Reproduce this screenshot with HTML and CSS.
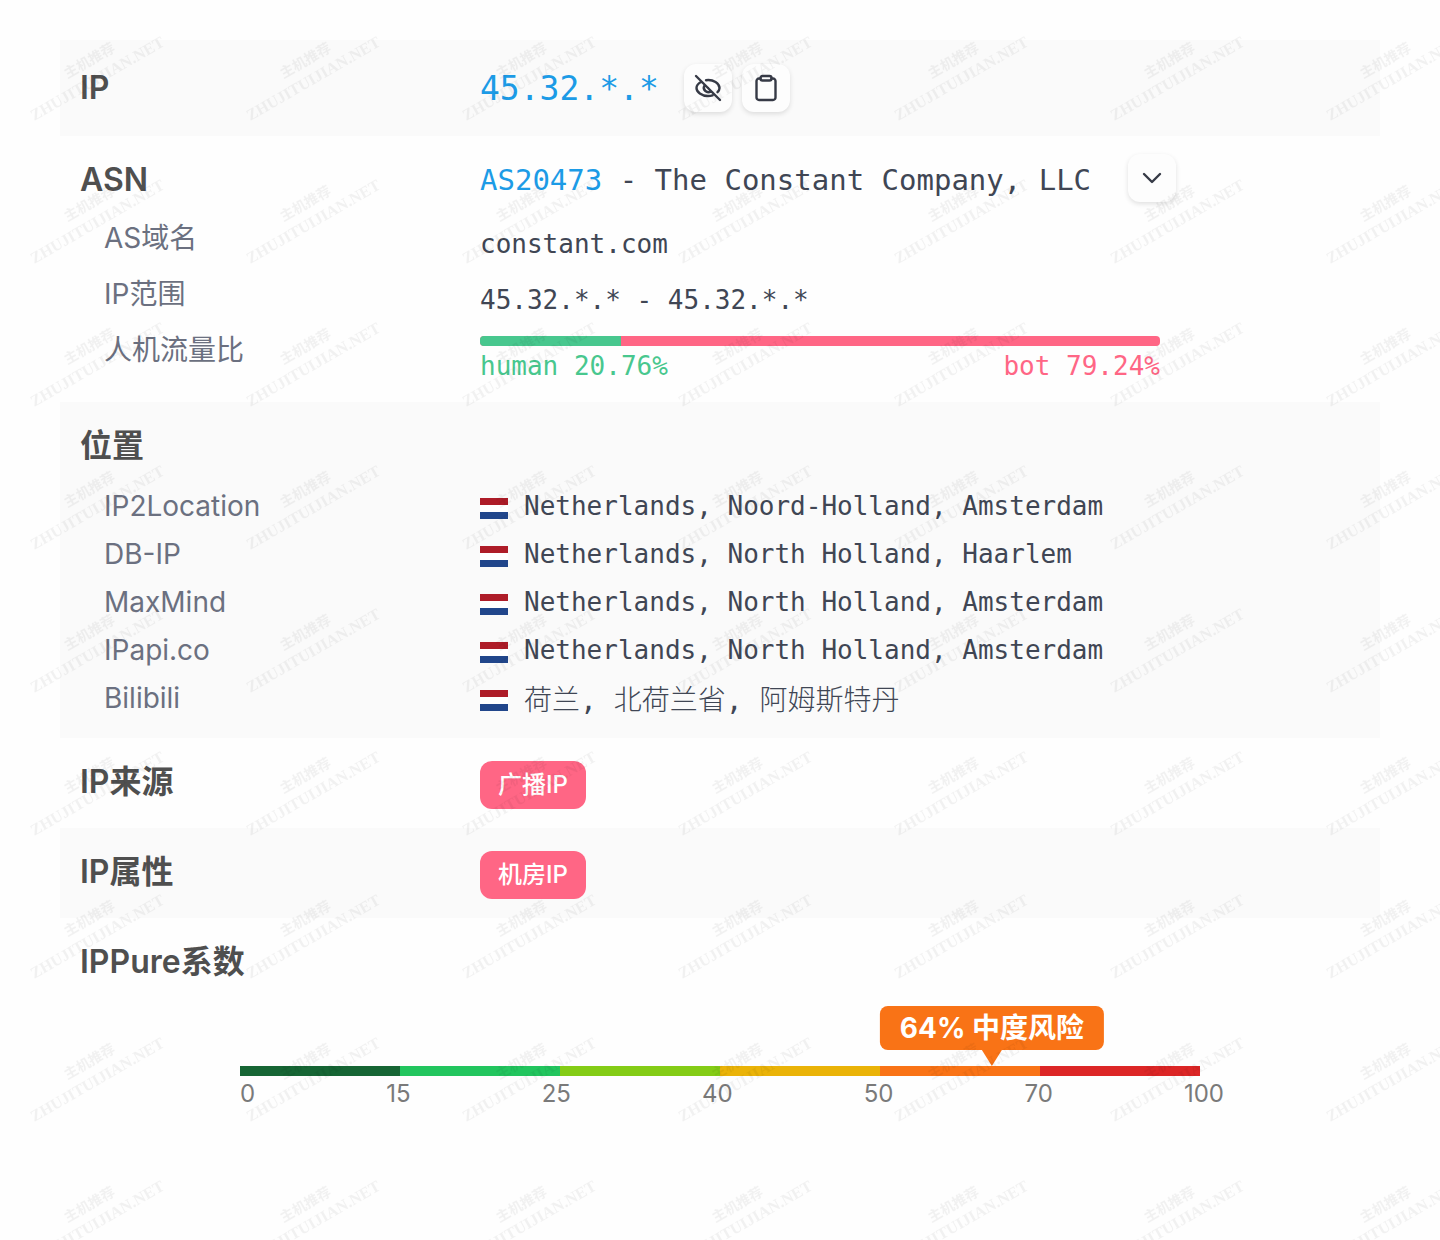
FILE: index.html
```html
<!DOCTYPE html>
<html lang="zh-CN">
<head>
    <meta charset="UTF-8">
    <meta name="viewport" content="width=device-width, initial-scale=1.0">
    <title>IPPure</title>
    <link rel="stylesheet" href="styles.css">
</head>
<body>
    <main>
        <section class="row row-ip">
            <h2>IP</h2>
            <div class="line">
                <a class="ip" href="#ip">45.32.*.*</a>
                <div class="buttons">
                    <button type="button" aria-label="隐藏IP">
                        <svg viewBox="0 0 28 28"><path d="M2 2l24 24M7 8C4.400 9.400 2.500 11.800 2.500 14c0 4 5 8 11.500 8 1.600 0 3.100-.2 4.500-.7M12 6.200C19.500 5.200 25.500 9.500 25.500 14c0 1.500-.7 3-2 4.200M10.300 11.800a4.300 4.300 0 0 0 6.400 5.400M14 13.800l.2.200"/></svg>
                    </button>
                    <button type="button" aria-label="复制IP">
                        <svg viewBox="0 0 28 28"><path d="M8.500 4.500H7A2.500 2.500 0 0 0 4.500 7v16.500A2.500 2.500 0 0 0 7 26h14a2.500 2.500 0 0 0 2.500-2.500V7A2.500 2.500 0 0 0 21 4.500h-1.500"/><rect x="8.500" y="2" width="11" height="4.500" rx="2"/></svg>
                    </button>
                </div>
            </div>
        </section>

        <section class="row">
            <div>
                <h2>ASN</h2>
                <ul class="names">
                    <li>AS域名</li>
                    <li>IP范围</li>
                    <li>人机流量比</li>
                </ul>
            </div>
            <div>
                <div class="line asn">
                    <span><a href="#asn">AS20473</a> - The Constant Company, LLC</span>
                    <button type="button" aria-label="展开">
                        <svg viewBox="0 0 28 28"><path d="M6 10l8 8 8-8"/></svg>
                    </button>
                </div>
                <ul class="values">
                    <li>constant.com</li>
                    <li>45.32.*.* - 45.32.*.*</li>
                </ul>
                <div class="traffic">
                    <div class="traffic-bar"><div style="width: 20.76%"></div></div>
                    <div class="traffic-text">
                        <span class="human">human 20.76%</span>
                        <span class="bot">bot 79.24%</span>
                    </div>
                </div>
            </div>
        </section>

        <section class="row">
            <h2 class="full">位置</h2>
            <ul class="sources">
                <li>IP2Location</li>
                <li>DB-IP</li>
                <li>MaxMind</li>
                <li>IPapi.co</li>
                <li>Bilibili</li>
            </ul>
            <ul class="places">
                <li><span class="flag"></span>Netherlands, Noord-Holland, Amsterdam</li>
                <li><span class="flag"></span>Netherlands, North Holland, Haarlem</li>
                <li><span class="flag"></span>Netherlands, North Holland, Amsterdam</li>
                <li><span class="flag"></span>Netherlands, North Holland, Amsterdam</li>
                <li class="cjk"><span class="flag"></span>荷兰, 北荷兰省, 阿姆斯特丹</li>
            </ul>
        </section>

        <section class="row row-tag">
            <h2>IP来源</h2>
            <div><span class="tag">广播IP</span></div>
        </section>

        <section class="row row-tag">
            <h2>IP属性</h2>
            <div><span class="tag">机房IP</span></div>
        </section>

        <section class="row">
            <h2 class="full">IPPure系数</h2>
            <div class="score full">
                <div class="scale">
                    <i class="c1"></i><i class="c2"></i><i class="c3"></i><i class="c4"></i><i class="c5"></i><i class="c6"></i>
                    <div class="tip" style="left: 78.33%">64% 中度风险</div>
                </div>
                <div class="ticks">
                    <span>0</span><span>15</span><span>25</span><span>40</span><span>50</span><span>70</span><span>100</span>
                </div>
            </div>
        </section>
    </main>

    <!-- Watermark -->
    <svg class="watermark" aria-hidden="true">
        <defs>
            <pattern id="mark" width="216" height="143" patternUnits="userSpaceOnUse">
                <g transform="rotate(-30 36 120)">
                    <text x="34" y="120" font-size="16">ZHUJITUIJIAN.NET</text>
                    <text x="84" y="100" font-size="14">主机推荐</text>
                </g>
            </pattern>
        </defs>
        <rect width="100%" height="100%" fill="url(#mark)"/>
    </svg>
</body>
</html>
```
FILE: styles.css
```css
* {
    margin: 0;
    padding: 0;
    box-sizing: border-box;
}
body {
    font-family: Inter, "Noto Sans CJK SC", sans-serif;
    background: #fefefe;
    color: #404654;
    min-height: 100vh;
    padding: 40px 60px;
}
ul {
    list-style: none;
}
a {
    color: #1c9be6;
    text-decoration: none;
}

/* Rows */
.row {
    display: grid;
    grid-template-columns: 400px 1fr;
    padding: 18px 20px 16px;
}
.row:nth-child(odd) {
    background: #fafafa;
}
.row-ip {
    padding: 24px 20px;
}
.row-tag {
    padding: 18px 20px 19px;
}
.full {
    grid-column: 1 / -1;
}
h2 {
    font-size: 32px;
    font-weight: 600;
    line-height: 52px;
    color: #4f4f4f;
}
.row-ip h2 {
    line-height: 48px;
}
.line {
    display: flex;
    align-items: center;
    height: 48px;
    font-family: Consolas, "DejaVu Sans Mono", monospace;
}
.ip {
    font-size: 33px;
}
.buttons {
    display: flex;
    gap: 10px;
    margin-left: 25px;
}
.asn {
    gap: 37px;
    font-size: 29px;
    white-space: nowrap;
}
.asn span {
    padding-top: 4px;
}
button {
    display: flex;
    align-items: center;
    justify-content: center;
    width: 48px;
    height: 48px;
    border: none;
    border-radius: 12px;
    background: #fdfdfd;
    box-shadow: 0 2px 5px rgba(0, 0, 0, 0.12);
    cursor: pointer;
}
button svg {
    width: 28px;
    height: 28px;
    fill: none;
    stroke: #363a46;
    stroke-width: 2.4;
    stroke-linecap: round;
    stroke-linejoin: round;
}

/* Lists */
.names, .sources {
    padding-left: 24px;
    font-size: 28px;
    color: #6b7080;
}
.names {
    margin-top: 4px;
    line-height: 56px;
}
.sources {
    line-height: 48px;
}
.values, .places, .traffic {
    font-family: Consolas, "DejaVu Sans Mono", "Noto Sans CJK SC", monospace;
    font-size: 26px;
}
.values {
    margin-top: 14px;
    line-height: 56px;
}
.sources, .places {
    margin-top: 10px;
}
.places li {
    display: flex;
    align-items: center;
    gap: 16px;
    height: 48px;
}
.places .cjk {
    font-size: 28px;
    font-weight: 300;
}
.flag {
    width: 28px;
    height: 21px;
    margin-top: 4px;
    background: linear-gradient(#ae1c28 0 7px, #fff 7px 14px, #21468b 14px);
}

/* Human / bot traffic */
.traffic {
    max-width: 680px;
    margin-top: 8px;
}
.traffic-bar {
    height: 10px;
    border-radius: 4px;
    background: #ff6685;
    overflow: hidden;
}
.traffic-bar div {
    height: 100%;
    background: #48c78e;
}
.traffic-text {
    display: flex;
    justify-content: space-between;
    line-height: 40px;
}
.human {
    color: #48c78e;
}
.bot {
    color: #ff6685;
}

.tag {
    display: inline-block;
    margin-top: 5px;
    padding: 0 18px;
    border-radius: 12px;
    background: #ff6685;
    color: #fff;
    font-size: 24px;
    font-weight: 500;
    line-height: 48px;
    vertical-align: top;
}

/* Score */
.score {
    width: 100%;
    max-width: 960px;
    margin: 78px auto 0;
}
.scale {
    display: flex;
    position: relative;
}
.scale i {
    flex: 1;
    height: 10px;
}
.c1 { background: #166534; }
.c2 { background: #22c55e; }
.c3 { background: #84cc16; }
.c4 { background: #eab308; }
.c5 { background: #f97316; }
.c6 { background: #dc2626; }
.tip {
    position: absolute;
    bottom: 26px;
    transform: translateX(-50%);
    padding: 0 20px;
    border-radius: 8px;
    background: #f97316;
    color: #fff;
    font-size: 28px;
    font-weight: 700;
    line-height: 44px;
    white-space: nowrap;
}
.tip::after {
    content: "";
    position: absolute;
    top: 100%;
    left: 50%;
    margin-left: -10px;
    border: 10px solid transparent;
    border-top: 16px solid #f97316;
    border-bottom: none;
}
.ticks {
    display: flex;
    justify-content: space-between;
    margin-right: -24px;
    color: #7a7a7a;
    font-size: 24px;
    line-height: 36px;
}

.watermark {
    position: fixed;
    inset: 0;
    width: 100%;
    height: 100%;
    pointer-events: none;
    font-family: "Liberation Serif", "Noto Sans CJK SC", serif;
    font-weight: 700;
    fill: rgba(0, 0, 0, 0.05);
}
```
